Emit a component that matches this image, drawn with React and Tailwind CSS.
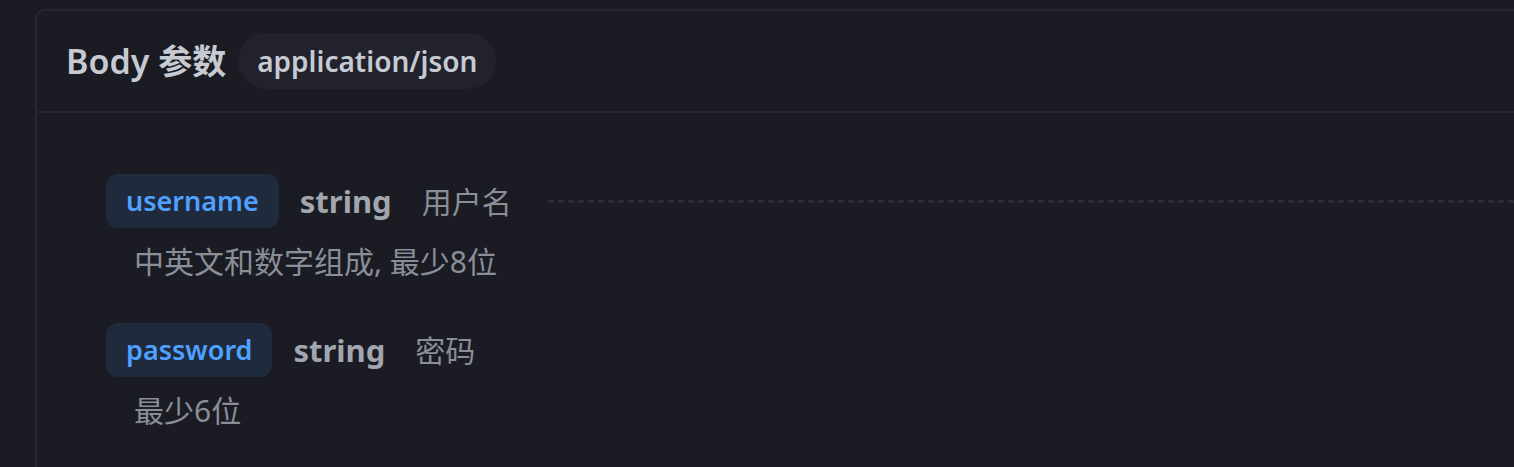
const params = [
  { name: 'username', type: 'string', label: '用户名', desc: '中英文和数字组成, 最少8位', dashed: true },
  { name: 'password', type: 'string', label: '密码', desc: '最少6位', dashed: false },
];

function ParamRow({ p }) {
  return (
    <div className="flex flex-col">
      <div className="flex h-[54px] items-center">
        <span className="flex h-[54px] items-center rounded-[12px] bg-[#1f2a3d] px-5 text-[27px] font-semibold text-[#4fa1ff]">
          {p.name}
        </span>
        <span className="ml-[21px] text-[31px] font-bold text-[#a2a6ae]">{p.type}</span>
        <span className="ml-[30px] text-[30px] text-[#8a8e97]">{p.label}</span>
        {p.dashed ? (
          <div className="ml-9 h-[3px] flex-1 bg-[repeating-linear-gradient(90deg,#2c2c39_0px,#2c2c39_6px,transparent_6px,transparent_10px)]" />
        ) : null}
      </div>
      <p className="mt-[16px] pl-7 text-[30px] leading-[36px] text-[#8a8e97]">{p.desc}</p>
    </div>
  );
}

export default function App() {
  return (
    <div
      className="h-[467px] overflow-hidden bg-[#1b1b23] pl-[35px] pt-[9px]"
      style={{ fontFamily: '"Noto Sans", "Noto Sans CJK SC", sans-serif' }}
    >
      <div className="h-[520px] rounded-tl-[10px] border-l-2 border-t-2 border-[#272732]">
        <div className="flex h-[100px] items-center gap-[12px] pl-[29px]">
          <h3 className="text-[34px] font-semibold text-[#c6cbd3]">Body 参数</h3>
          <span className="flex h-[56px] items-center rounded-full bg-[#22222c] px-[19px] text-[28px] font-semibold text-[#c6cbd3]">
            application/json
          </span>
        </div>
        <div className="h-[2px] bg-[#272732]" />
        <div className="flex flex-col gap-[43px] pl-[69px] pt-[61px]">
          {params.map((p) => (
            <ParamRow key={p.name} p={p} />
          ))}
        </div>
      </div>
    </div>
  );
}
